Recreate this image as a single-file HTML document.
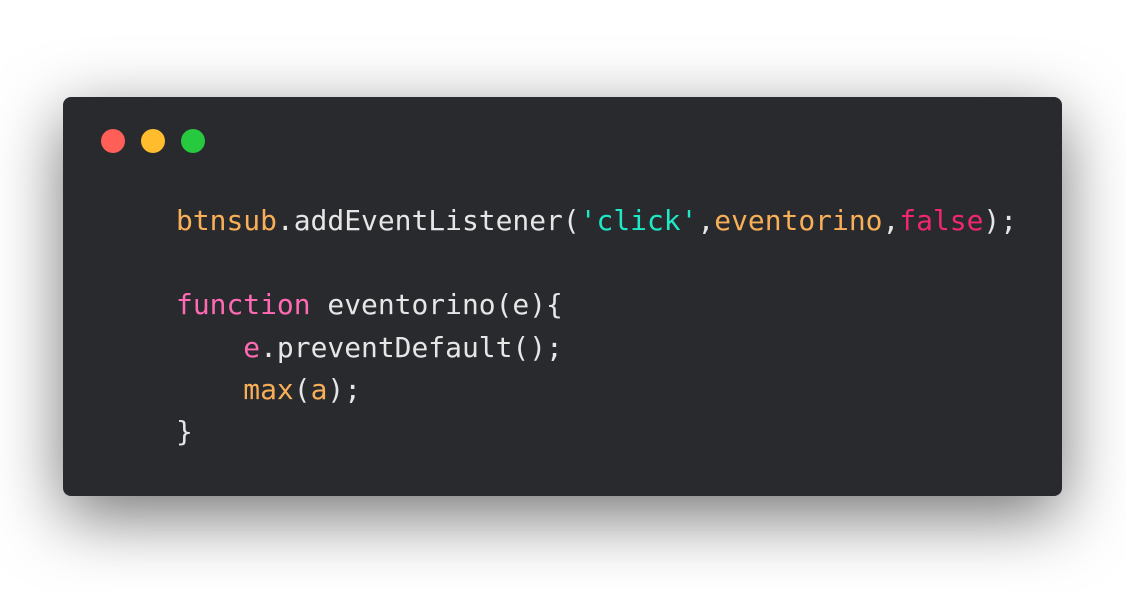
<!DOCTYPE html>
<html><head><meta charset="utf-8"><style>
html,body{margin:0;padding:0;width:1126px;height:594px;background:#fff;overflow:hidden}
.win{position:absolute;left:63px;top:97px;width:999px;height:399px;background:#282a2e;border-radius:8px;box-shadow:0 20px 68px rgba(0,0,0,0.55)}
.dot{position:absolute;top:32px;width:24px;height:24px;border-radius:50%}
pre{position:absolute;left:113px;top:103px;margin:0;font-family:"DejaVu Sans Mono","Liberation Mono",monospace;font-size:27.95px;line-height:42.2px;color:#e6e6e6}
.o{color:#f9ae58}.p{color:#ff6ab3}.c{color:#1de9c6}.r{color:#f0266f}
</style></head><body>
<div class="win">
<div class="dot" style="left:38px;background:#ff5f56"></div>
<div class="dot" style="left:78px;background:#ffbd2e"></div>
<div class="dot" style="left:118px;background:#27c93f"></div>
<pre><span class="o">btnsub</span>.addEventListener(<span class="c">'click'</span>,<span class="o">eventorino</span>,<span class="r">false</span>);

<span class="p">function</span> eventorino(e){
    <span class="p">e</span>.preventDefault();
    <span class="o">max</span>(<span class="o">a</span>);
}</pre>
</div>
</body></html>
